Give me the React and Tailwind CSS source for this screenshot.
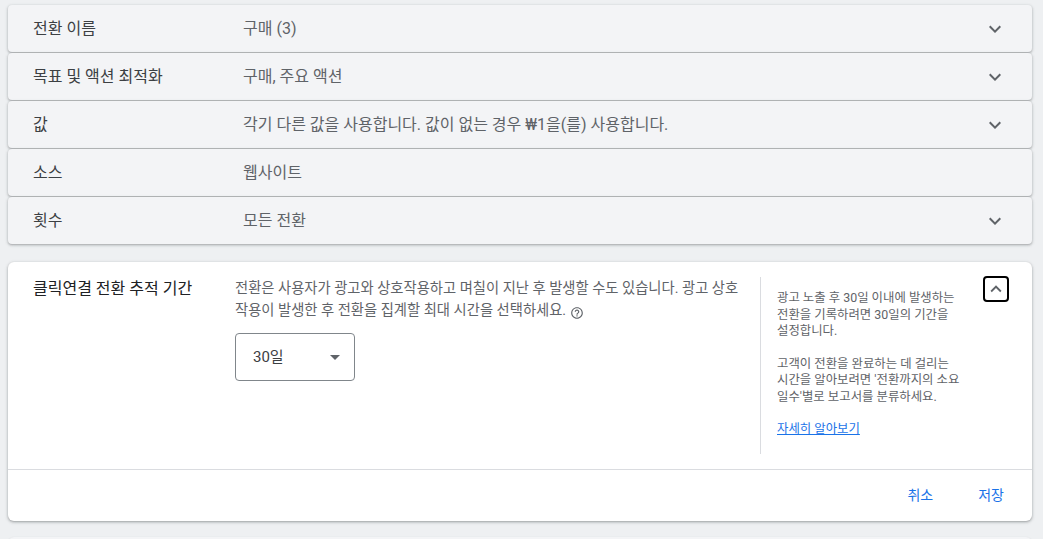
import React from "react";

const font = { fontFamily: "Roboto, 'Noto Sans CJK KR', sans-serif" };

function Chevron({ up = false }) {
  return (
    <svg width="24" height="24" viewBox="0 0 24 24" className="text-[#5f6368]">
      <path d={up ? "M7.41 15.41 12 10.83l4.59 4.58L18 14l-6-6-6 6z" : "M7.41 8.59 12 13.17l4.59-4.58L18 10l-6 6-6-6z"} fill="currentColor" />
    </svg>
  );
}

function HelpIcon() {
  return (
    <svg width="14" height="14" viewBox="0 0 24 24" className="inline-block translate-y-[2px] text-[#5f6368]">
      <path fill="currentColor" d="M11 18h2v-2h-2v2zm1-16C6.48 2 2 6.48 2 12s4.48 10 10 10 10-4.48 10-10S17.52 2 12 2zm0 18c-4.41 0-8-3.590-8-8s3.59-8 8-8 8 3.59 8 8-3.59 8-8 8zm0-14c-2.21 0-4 1.79-4 4h2c0-1.1.9-2 2-2s2 .9 2 2c0 2-3 1.75-3 5h2c0-2.25 3-2.5 3-5 0-2.21-1.79-4-4-4z" />
    </svg>
  );
}

function Row({ label, value, chevron = true }) {
  return (
    <div className="flex h-[47px] items-center rounded-[4px] bg-[#f3f4f6] shadow-[0_1px_2px_rgba(60,64,67,0.3),0_1px_3px_1px_rgba(60,64,67,0.12)]">
      <div className="w-[235px] shrink-0 pl-[25px] text-[16px] text-[#3c4043]">{label}</div>
      <div className="flex-1 text-[16px] text-[#5f6368]">{value}</div>
      <div className="flex w-[49px] justify-start">{chevron ? <Chevron /> : null}</div>
    </div>
  );
}

export default function App() {
  return (
    <div className="min-h-[539px] bg-[#eef0f2] pl-[8px] pr-[11px] pt-[5px]" style={font}>
      <div className="flex flex-col gap-[1px]">
        <Row label="전환 이름" value="구매 (3)" />
        <Row label="목표 및 액션 최적화" value="구매, 주요 액션" />
        <Row label="값" value="각기 다른 값을 사용합니다. 값이 없는 경우 ₩1을(를) 사용합니다." />
        <Row label="소스" value="웹사이트" chevron={false} />
        <Row label="횟수" value="모든 전환" />
      </div>

      <div className="mt-[18px] rounded-[6px] bg-white shadow-[0_1px_2px_rgba(60,64,67,0.3),0_1px_3px_1px_rgba(60,64,67,0.15)]">
        <div className="flex h-[207px] pt-[15px]">
          <div className="w-[227px] shrink-0 pl-[25px] pt-[1px] text-[16px] leading-[22px] text-[#202124]">
            클릭연결 전환 추적 기간
          </div>
          <div className="w-[525px] shrink-0">
            <p className="w-[518px] text-[14.3px] leading-[22px] text-[#5f6368]">
              전환은 사용자가 광고와 상호작용하고 며칠이 지난 후 발생할 수도 있습니다. 광고 상호
              작용이 발생한 후 전환을 집계할 최대 시간을 선택하세요. <HelpIcon />
            </p>
            <div className="mt-[12px] flex h-[48px] w-[120px] items-center justify-between rounded-[4px] border border-[#80868b] pl-[17px] pr-[14px] text-[15px] text-[#3c4043]">
              <span>30일</span>
              <svg width="10" height="5" viewBox="0 0 10 5"><path d="M0 0l5 5 5-5z" fill="#5f6368" /></svg>
            </div>
          </div>
          <div className="mb-[15px] w-[200px] shrink-0 border-l border-[#dadce0] pl-[16px] pt-[13px] text-[12.4px] leading-[16.5px] text-[#5f6368]">
            <p>광고 노출 후 30일 이내에 발생하는<br />전환을 기록하려면 30일의 기간을<br />설정합니다.</p>
            <p className="mt-[16px]">고객이 전환을 완료하는 데 걸리는<br />시간을 알아보려면 '전환까지의 소요<br />일수'별로 보고서를 분류하세요.</p>
            <p className="mt-[16px]"><span className="text-[#1a73e8] underline">자세히 알아보기</span></p>
          </div>
          <div className="flex flex-1 justify-start pl-[23px]">
            <div className="-mt-[1px] flex h-[26px] w-[26px] items-center justify-center rounded-[4px] border-2 border-black">
              <Chevron up />
            </div>
          </div>
        </div>
        <div className="flex h-[52px] items-center justify-end gap-[45px] border-t border-[#dadce0] pr-[28px] text-[14px] text-[#1a73e8]">
          <span>취소</span>
          <span>저장</span>
        </div>
      </div>

      <div className="mt-[16px] h-[10px] rounded-t-[6px] bg-[#f3f4f6] shadow-[0_1px_2px_rgba(60,64,67,0.3)]" />
    </div>
  );
}
